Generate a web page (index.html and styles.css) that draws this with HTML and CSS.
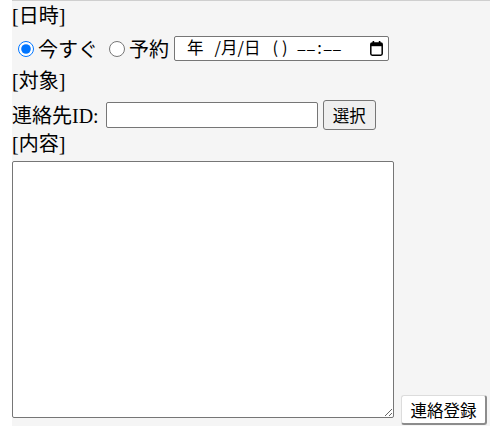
FILE: index.html
```html
<!DOCTYPE html>
<html lang="ja">
<head>
<meta charset="utf-8">
<title>連絡登録</title>
<link rel="stylesheet" href="styles.css">
</head>
<body>
<div class="page">
  <form class="panel">
    <div class="label">[日時]</div>
    <div class="row row-when">
      <label class="opt"><input class="radio" type="radio" name="when" checked>今すぐ</label>
      <label class="opt"><input class="radio" type="radio" name="when">予約</label>
      <span class="datetime">
        <span class="dt-text">年<span class="dt-sep">/</span>月/日<span class="dt-paren">()</span><span class="dt-dash">––</span><span class="dt-colon">:</span><span class="dt-dash">––</span></span>
        <svg class="cal" width="13" height="15" viewBox="0 0 13 15" aria-hidden="true">
          <rect x="2.6" y="0" width="1.6" height="3" fill="#000"/>
          <rect x="8.8" y="0" width="1.6" height="3" fill="#000"/>
          <rect x="0.8" y="2" width="11.4" height="12.2" rx="1.4" fill="none" stroke="#000" stroke-width="1.5"/>
          <rect x="0.8" y="2" width="11.4" height="3.2" fill="#000"/>
        </svg>
      </span>
    </div>
    <div class="label">[対象]</div>
    <div class="row row-target">
      <span>連絡先ID:</span>
      <input class="text" type="text">
      <button class="btn" type="button">選択</button>
    </div>
    <div class="label label-last">[内容]</div>
    <div class="row-content">
      <textarea class="memo"></textarea>
      <button class="submit" type="button">連絡登録</button>
    </div>
  </form>
</div>
</body>
</html>
```

FILE: styles.css
```css
html, body {
  margin: 0;
  padding: 0;
  background: #ffffff;
}

.page {
  padding-left: 12px;
}

.panel {
  background: #f5f5f5;
  border-top: 1px solid #cfcfcf;
  min-height: 440px;
  font-family: "Liberation Serif", "Noto Sans CJK JP", serif;
  font-size: 20px;
  color: #000;
}

.label {
  height: 31px;
  line-height: 31px;
  white-space: nowrap;
}

.row {
  display: flex;
  align-items: center;
  white-space: nowrap;
}

.row-when {
  height: 33px;
}

.row-when + .label {
  height: 32px;
  line-height: 32px;
}

.row-target {
  height: 35px;
}

.label-last {
  height: 24px;
  line-height: 24px;
}

.opt {
  display: flex;
  align-items: center;
  margin-right: 5px;
}

.radio {
  width: 16px;
  height: 16px;
  margin: 0 4px 0 6px;
}

.datetime {
  box-sizing: border-box;
  display: flex;
  align-items: center;
  justify-content: space-between;
  width: 215px;
  height: 25px;
  background: #fff;
  border: 1px solid #767676;
  border-radius: 2px;
  padding: 0 5px 0 12px;
  font-family: "Noto Sans CJK JP", sans-serif;
  font-size: 16.5px;
  line-height: 23px;
}

.dt-text {
  white-space: pre;
}

.dt-sep {
  margin-left: 11px;
}

.dt-paren {
  margin: 0 6px 0 12px;
  letter-spacing: 4px;
}

.dt-dash {
  font-family: "Liberation Sans", sans-serif;
  font-size: 14px;
  letter-spacing: 1.5px;
}

.dt-colon {
  margin: 0 2px 0 1px;
}

.cal {
  display: block;
}

.text {
  box-sizing: border-box;
  width: 212px;
  height: 26px;
  margin: 0 5px 0 7px;
  border: 1px solid #767676;
  border-radius: 2px;
  background: #fff;
  padding: 1px 3px;
  font-size: 16px;
}

.btn {
  box-sizing: border-box;
  height: 30px;
  width: 53px;
  padding: 0 6px;
  border: 1px solid #767676;
  border-radius: 3px;
  background: #efefef;
  font-family: "Noto Sans CJK JP", sans-serif;
  font-size: 16.5px;
  color: #000;
}

.row-content {
  display: flex;
  align-items: flex-end;
  margin-top: 5px;
}

.memo {
  box-sizing: border-box;
  width: 382px;
  height: 257px;
  margin: 0;
  padding: 3px;
  border: 1px solid #767676;
  border-radius: 2px;
  background: #fff;
  resize: both;
}

.submit {
  box-sizing: border-box;
  height: 30px;
  width: 86px;
  margin: 0 0 -7px 7px;
  padding: 0 6px;
  background: #fff;
  border: 1px solid #dcdcdc;
  border-right: 2px solid #8c8c8c;
  border-bottom: 2px solid #8c8c8c;
  border-radius: 3px;
  font-family: "Noto Sans CJK JP", sans-serif;
  font-size: 16.5px;
  color: #000;
}
```
